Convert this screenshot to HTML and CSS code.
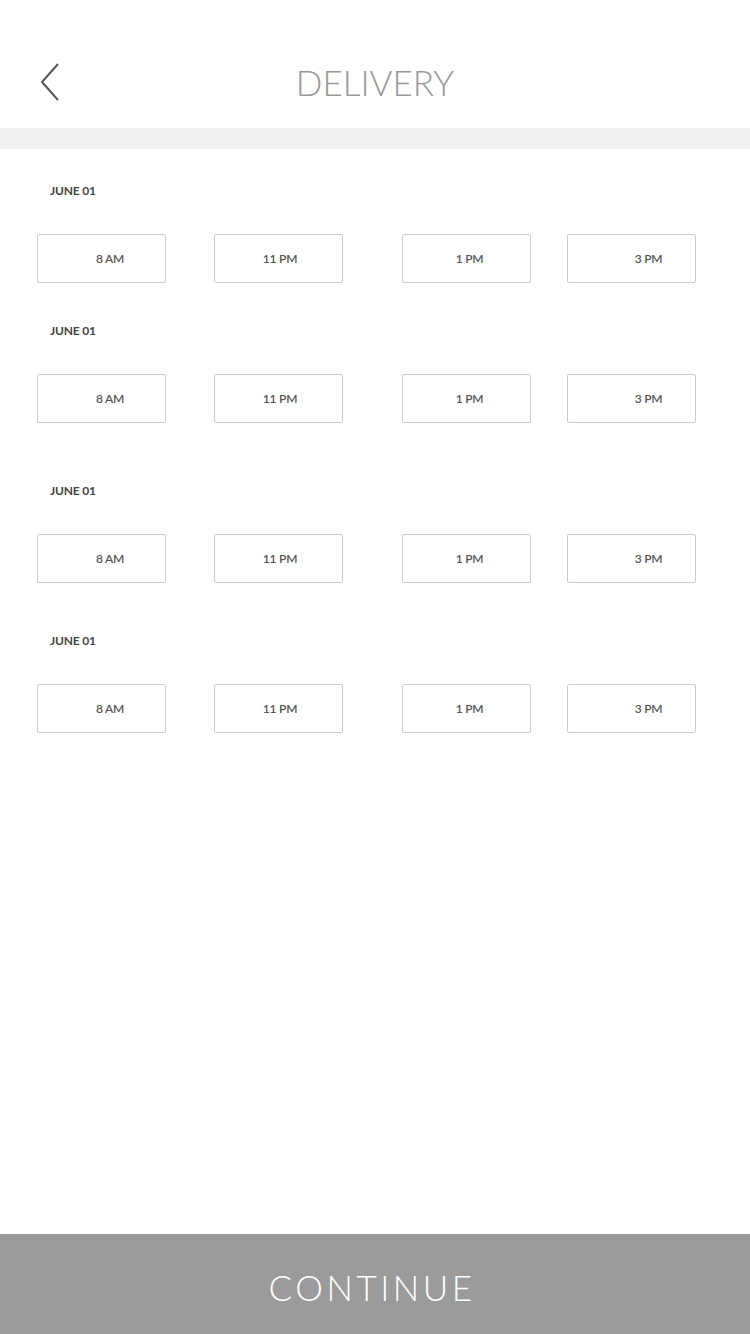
FILE: index.html
```html
<!DOCTYPE html>
<html lang="en">
<head>
  <meta charset="UTF-8" />
  <meta name="viewport" content="width=device-width, initial-scale=1.0"/>
  <title>Delivery</title>
  <link rel="stylesheet" href="styles.css">
</head>
<body>

  <header>
    <button class="back" aria-label="Back">
      <svg width="20" height="38" viewBox="0 0 20 38">
        <polyline points="18,1 2,19 18,37" fill="none" stroke="#555" stroke-width="2"/>
      </svg>
    </button>
    <h1>DELIVERY</h1>
  </header>

  <div class="divider"></div>

  <main class="slots">
    <section class="day">
      <div class="date">JUNE 01</div>
      <div class="times">
        <button>8 AM</button>
        <button>11 PM</button>
        <button>1 PM</button>
        <button>3 PM</button>
      </div>
    </section>

    <section class="day">
      <div class="date">JUNE 01</div>
      <div class="times">
        <button>8 AM</button>
        <button>11 PM</button>
        <button>1 PM</button>
        <button>3 PM</button>
      </div>
    </section>

    <section class="day">
      <div class="date">JUNE 01</div>
      <div class="times">
        <button>8 AM</button>
        <button>11 PM</button>
        <button>1 PM</button>
        <button>3 PM</button>
      </div>
    </section>

    <section class="day">
      <div class="date">JUNE 01</div>
      <div class="times">
        <button>8 AM</button>
        <button>11 PM</button>
        <button>1 PM</button>
        <button>3 PM</button>
      </div>
    </section>
  </main>

  <footer>
    <button class="continue">CONTINUE</button>
  </footer>

</body>
</html>
```

FILE: styles.css
```css
body {
  font-family: Lato, "Open Sans", Arial, sans-serif;
  margin: 0;
  background-color: #fff;
  width: 750px;
  height: 1334px;
  display: flex;
  flex-direction: column;
}

header {
  height: 128px;
  display: flex;
  align-items: center;
  justify-content: center;
  position: relative;
}

.back {
  position: absolute;
  left: 40px;
  top: 63px;
  padding: 0;
  border: none;
  background: none;
  cursor: pointer;
}

.back svg {
  display: block;
}

header h1 {
  margin: 0;
  padding-top: 36px;
  font-size: 35px;
  font-weight: 300;
  color: #999;
}

.divider {
  height: 21px;
  background-color: #f0f1f2;
}

/* Horarios */
.slots {
  flex: 1;
  padding-top: 31px;
}

.day:nth-child(2) {
  margin-top: 37px;
}

.day:nth-child(3) {
  margin-top: 57px;
}

.day:nth-child(4) {
  margin-top: 47px;
}

.date {
  padding-left: 50px;
  height: 22px;
  line-height: 22px;
  font-size: 12px;
  font-weight: 700;
  color: #444;
  letter-spacing: -0.2px;
}

.times {
  margin-top: 32px;
  display: grid;
  grid-template-columns: 177px 188px 165px 129px;
  padding-left: 37px;
}

.times button {
  width: 129px;
  height: 49px;
  padding-right: 0;
  background: #fff;
  border: 1px solid #ccc;
  border-radius: 2px;
  font-family: inherit;
  font-size: 12px;
  font-weight: 600;
  color: #555;
  letter-spacing: -0.2px;
  cursor: pointer;
}

.times button:nth-child(1) {
  padding-left: 17px;
}

.times button:nth-child(2) {
  padding-left: 3px;
}

.times button:nth-child(3) {
  padding-left: 6px;
}

.times button:nth-child(4) {
  padding-left: 34px;
}

footer {
  height: 100px;
}

.continue {
  width: 100%;
  height: 100%;
  border: none;
  background-color: #9b9b9b;
  color: #fff;
  font-family: inherit;
  font-size: 35px;
  font-weight: 300;
  letter-spacing: 3.5px;
  padding: 6px 6px 0 0;
  cursor: pointer;
}
```
